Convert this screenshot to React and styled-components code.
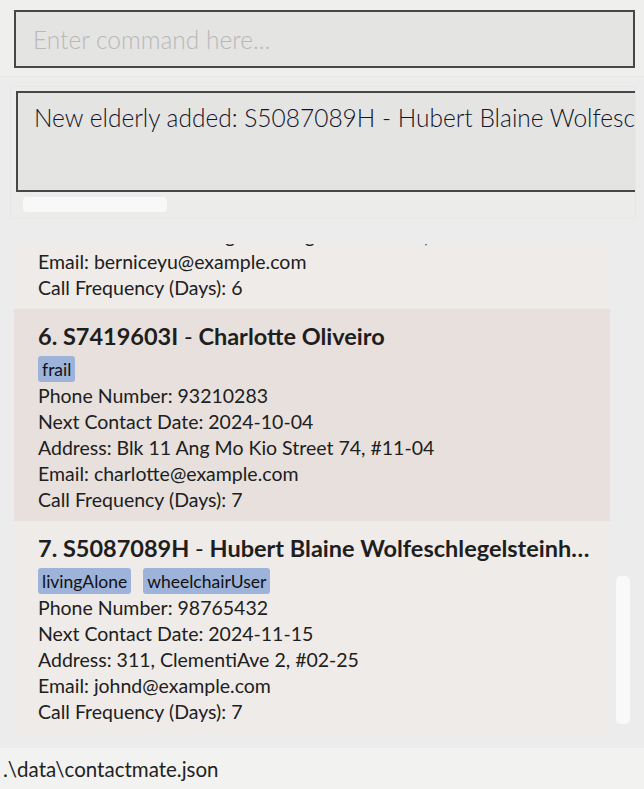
import { useLayoutEffect, useRef } from 'react';
import styled, { createGlobalStyle } from 'styled-components';

const GlobalStyle = createGlobalStyle`
  html, body {
    margin: 0;
    padding: 0;
    background: #ececec;
  }
  body {
    font-family: "Segoe UI", Lato, "Liberation Sans", sans-serif;
  }
`;

const persons = [
  {
    id: 'S1234567A',
    name: 'Alex Yeoh',
    tags: ['livingAlone'],
    phone: '87438807',
    next: '2024-09-20',
    address: 'Blk 30 Geylang Street 29, #06-40',
    email: 'alexyeoh@example.com',
    freq: 7,
  },
  {
    id: 'S2345678B',
    name: 'Bernice Yu',
    tags: ['frail'],
    phone: '99272758',
    next: '2024-09-22',
    address: 'Blk 30 Lorong 3 Serangoon Gardens, #07-18',
    email: 'berniceyu@example.com',
    freq: 6,
  },
  {
    id: 'S3456789C',
    name: 'Charlotte Oliveiro',
    tags: ['frail'],
    phone: '93210283',
    next: '2024-10-04',
    address: 'Blk 11 Ang Mo Kio Street 74, #11-04',
    email: 'charlotte@example.com',
    freq: 7,
  },
  {
    id: 'S4567890D',
    name: 'David Li',
    tags: ['wheelchairUser'],
    phone: '91031282',
    next: '2024-10-10',
    address: 'Blk 436 Serangoon Gardens Street 26, #16-43',
    email: 'lidavid@example.com',
    freq: 5,
  },
  {
    id: 'S6543210E',
    name: 'Bernice Yu',
    tags: ['livingAlone'],
    phone: '99272758',
    next: '2024-09-28',
    address: 'Blk 30 Lorong 3 Serangoon Gardens, #07-18',
    email: 'berniceyu@example.com',
    freq: 6,
  },
  {
    id: 'S7419603I',
    name: 'Charlotte Oliveiro',
    tags: ['frail'],
    phone: '93210283',
    next: '2024-10-04',
    address: 'Blk 11 Ang Mo Kio Street 74, #11-04',
    email: 'charlotte@example.com',
    freq: 7,
  },
  {
    id: 'S5087089H',
    name: 'Hubert Blaine Wolfeschlegelsteinhausenbergerdorff',
    tags: ['livingAlone', 'wheelchairUser'],
    phone: '98765432',
    next: '2024-11-15',
    address: '311, ClementiAve 2, #02-25',
    email: 'johnd@example.com',
    freq: 7,
  },
];

const Window = styled.div`
  width: 644px;
  height: 789px;
  display: flex;
  flex-direction: column;
  background: #ececec;
  overflow: hidden;
`;

const CommandArea = styled.div`
  flex-shrink: 0;
  padding: 10px 9px 8px 14px;
  background: #efefee;
  border-bottom: 1px solid #e8e8e7;
`;

const CommandInput = styled.div`
  height: 54px;
  border: 2px solid #474747;
  background: #e4e4e3;
  display: flex;
  align-items: center;
  padding-left: 17px;
  font-size: 24.5px;
  font-weight: 300;
  color: #b8b8b8;
`;

const ResultArea = styled.div`
  flex-shrink: 0;
  margin: 9px 8px 0 10px;
  padding: 4px 0 6px 5px;
  background: #ececeb;
  border: 1px solid #e7e7e6;
  display: flex;
  flex-direction: column;
  gap: 5px;
  overflow: hidden;
`;

const ResultBox = styled.div`
  flex-shrink: 0;
  box-sizing: border-box;
  height: 101px;
  border: 2px solid #474747;
  border-right: none;
  background: #e4e4e3;
  padding: 10px 0 0 16px;
  font-size: 24.5px;
  font-weight: 300;
  color: #14142a;
  white-space: nowrap;
  overflow: hidden;
`;

const HThumb = styled.div`
  flex-shrink: 0;
  margin-left: 7px;
  width: 144px;
  height: 15px;
  border-radius: 4px;
  background: #f8f8f8;
`;

const ListArea = styled.div`
  flex: 1 1 0;
  position: relative;
  margin-top: 9px;
  padding-top: 16px;
  min-height: 0;
  display: flex;
  flex-direction: column;
`;

const ListViewport = styled.div`
  flex: 1 1 0;
  min-height: 0;
  overflow-y: scroll;
  scrollbar-width: none;
  padding: 0 34px 0 14px;
  &::-webkit-scrollbar {
    display: none;
  }
`;

const ListEnd = styled.div`
  height: 15px;
`;

const VThumb = styled.div`
  position: absolute;
  right: 14px;
  bottom: 24px;
  width: 14px;
  height: 148px;
  border-radius: 5px;
  background: #f9f9f9;
`;

const Card = styled.div`
  height: 212px;
  box-sizing: border-box;
  padding: 12px 18px 0 24px;
  background: ${(p) => (p.$even ? '#e7e0dc' : '#efebe8')};
  color: #222;
`;

const Title = styled.div`
  font-size: 23.5px;
  font-weight: 700;
  line-height: 30px;
  white-space: nowrap;
  overflow: hidden;
  text-overflow: ellipsis;
  color: #1e1e1e;
`;

const Dash = styled.span`
  font-weight: 400;
`;

const TagRow = styled.div`
  display: flex;
  gap: 12px;
  margin: 5px 0 1px;
`;

const Tag = styled.span`
  height: 26px;
  display: flex;
  align-items: center;
  padding: 0 4px;
  border-radius: 3px;
  background: #9db3da;
  color: #111;
  font-size: 17.5px;
`;

const Detail = styled.div`
  font-size: 19.5px;
  line-height: 26px;
  color: #202020;
`;

const StatusBar = styled.div`
  flex-shrink: 0;
  height: 41px;
  display: flex;
  align-items: center;
  padding-left: 3px;
  background: #f2f2f1;
  font-size: 20.5px;
  color: #222;
`;

function PersonCard({ person, index }) {
  return (
    <Card $even={index % 2 === 0}>
      <Title>
        {index}. {person.id} <Dash>-</Dash> {person.name}
      </Title>
      <TagRow>
        {person.tags.map((t) => (
          <Tag key={t}>{t}</Tag>
        ))}
      </TagRow>
      <Detail>Phone Number: {person.phone}</Detail>
      <Detail>Next Contact Date: {person.next}</Detail>
      <Detail>Address: {person.address}</Detail>
      <Detail>Email: {person.email}</Detail>
      <Detail>Call Frequency (Days): {person.freq}</Detail>
    </Card>
  );
}

export default function App() {
  const listRef = useRef(null);

  useLayoutEffect(() => {
    if (listRef.current) {
      listRef.current.scrollTop = listRef.current.scrollHeight;
    }
  }, []);

  return (
    <>
      <GlobalStyle />
      <Window>
        <CommandArea>
          <CommandInput>Enter command here...</CommandInput>
        </CommandArea>
        <ResultArea>
          <ResultBox>
            New elderly added: S5087089H - Hubert Blaine Wolfeschlegelsteinhausenbergerdorff; Phone: 98765432
          </ResultBox>
          <HThumb />
        </ResultArea>
        <ListArea>
          <ListViewport ref={listRef}>
            {persons.map((p, i) => (
              <PersonCard key={i} person={p} index={i + 1} />
            ))}
            <ListEnd />
          </ListViewport>
          <VThumb />
        </ListArea>
        <StatusBar>.\data\contactmate.json</StatusBar>
      </Window>
    </>
  );
}
